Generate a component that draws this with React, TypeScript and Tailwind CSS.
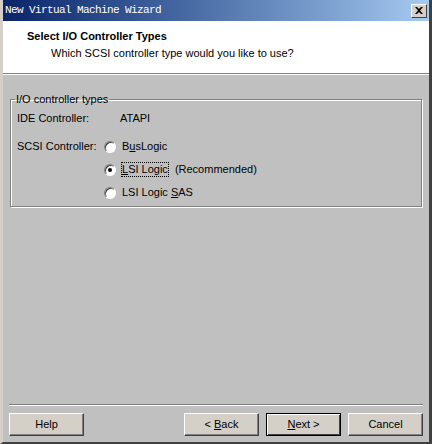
import { FC, ReactNode } from "react";

const font = { fontFamily: '"Liberation Sans", "DejaVu Sans", sans-serif' };

const Radio: FC<{ checked?: boolean }> = ({ checked }) => (
  <span className="relative inline-block w-[12px] h-[12px] rounded-full bg-white border border-t-[#808080] border-l-[#808080] border-r-[#ffffff] border-b-[#ffffff] shadow-[inset_1px_1px_0_#404040]">
    {checked ? (
      <span className="absolute left-[3px] top-[3px] w-[4px] h-[4px] rounded-full bg-black" />
    ) : null}
  </span>
);

const Btn: FC<{ children: ReactNode; primary?: boolean }> = ({ children, primary }) => (
  <div
    className={`w-[75px] h-[23px] flex items-center justify-center bg-[#d4d0c8] text-[11px] text-black ${
      primary
        ? "border border-black shadow-[inset_1px_1px_0_#fff,inset_-1px_-1px_0_#404040]"
        : "border-t border-l border-t-white border-l-white border-r border-b border-r-[#404040] border-b-[#404040] shadow-[inset_-1px_-1px_0_#808080]"
    }`}
  >
    {children}
  </div>
);

export default function App() {
  return (
    <div
      className="w-[432px] h-[444px] flex flex-col bg-[#c0c0c0] border-l-[3px] border-l-[#d4d0c8] border-r-[3px] border-r-[#404040] border-b-[2px] border-b-[#404040]"
      style={font}
    >
      {/* title bar */}
      <div className="h-[21px] flex items-center justify-between pl-[2px] pr-[2px] bg-gradient-to-r from-[#0a246a] to-[#a6caf0]">
        <span
          className="text-white text-[11px] leading-none tracking-[-0.6px]"
          style={{ fontFamily: '"Liberation Mono", monospace' }}
        >
          New Virtual Machine Wizard
        </span>
        <div className="w-[16px] h-[14px] bg-[#d4d0c8] border-t border-l border-t-white border-l-white border-r border-b border-r-[#404040] border-b-[#404040] flex items-center justify-center">
          <svg width="8" height="7" viewBox="0 0 8 7">
            <path d="M0 0h2l2 2 2-2h2L5 3.5 8 7H6L4 5 2 7H0l3-3.5z" fill="#000" />
          </svg>
        </div>
      </div>

      {/* header */}
      <div className="h-[52px] bg-white flex flex-col pl-[24px] pt-[9px]">
        <div className="text-[11px] font-bold text-black leading-[13px]">Select I/O Controller Types</div>
        <div className="text-[11px] text-black leading-[13px] pl-[24px] pt-[4px]">
          Which SCSI controller type would you like to use?
        </div>
      </div>
      <div className="h-[2px] border-t border-t-[#808080] border-b border-b-white" />

      {/* body */}
      <div className="flex-1 px-[7px] pt-[18px]">
        <fieldset className="border border-[#808080] shadow-[1px_1px_0_#fff,inset_1px_1px_0_#fff] px-[6px] pb-[8px] h-[114px]">
          <legend className="text-[11px] text-black px-[1px] ml-[-2px] leading-[13px]">I/O controller types</legend>
          <div className="text-[11px] text-black leading-[13px]">
            <div className="flex mt-[6px]">
              <span className="w-[103px]">IDE Controller:</span>
              <span>ATAPI</span>
            </div>
            <div className="flex mt-[15px]">
              <span className="w-[87px]">SCSI Controller:</span>
              <div className="flex flex-col gap-[10px]">
                <div className="flex items-center gap-[6px]">
                  <Radio />
                  <span>
                    B<span className="underline">u</span>sLogic
                  </span>
                </div>
                <div className="flex items-center gap-[6px]">
                  <Radio checked />
                  <span className="outline-1 outline-dotted outline-black">
                    <span className="underline">L</span>SI Logic
                  </span>
                  <span className="ml-[1px]">(Recommended)</span>
                </div>
                <div className="flex items-center gap-[6px]">
                  <Radio />
                  <span>
                    LSI Logic <span className="underline">S</span>AS
                  </span>
                </div>
              </div>
            </div>
          </div>
        </fieldset>
      </div>

      {/* footer */}
      <div className="mx-[6px] h-[2px] border-t border-t-[#808080] border-b border-b-white" />
      <div className="h-[36px] flex items-center px-[6px]">
        <Btn>Help</Btn>
        <div className="flex-1" />
        <div className="flex gap-[7px]">
          <Btn>
            &lt; <span className="underline ml-[3px]">B</span>ack
          </Btn>
          <Btn primary>
            <span className="underline">N</span>ext &gt;
          </Btn>
          <Btn>Cancel</Btn>
        </div>
      </div>
    </div>
  );
}
